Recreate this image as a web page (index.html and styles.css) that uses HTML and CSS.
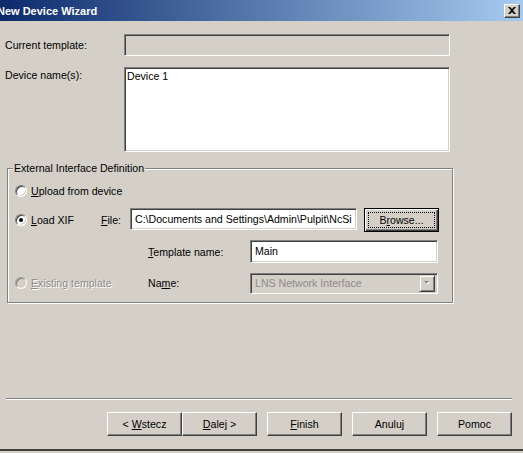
FILE: index.html
```
<!DOCTYPE html>
<html lang="pl">
<head>
<meta charset="utf-8">
<title>New Device Wizard</title>
<link rel="stylesheet" href="styles.css">
</head>
<body>
<div class="window">
  <div class="titlebar">
    <span class="title">New Device Wizard</span>
    <span class="close-btn"><svg width="8" height="7" viewBox="0 0 8 7"><path d="M0 0h2l2 2 2-2h2L5 3.5 8 7H6L4 5 2 7H0l3-3.5z" fill="#000"/></svg></span>
  </div>
  <div class="content">
    <div class="form-row row-template">
      <span class="lbl">Current template:</span>
      <div class="field field-disabled"></div>
    </div>
    <div class="form-row row-names">
      <span class="lbl lbl-names">Device name(s):</span>
      <div class="field field-area">Device 1</div>
    </div>
    <fieldset class="group">
      <legend class="group-title">External Interface Definition</legend>
      <div class="group-grid">
        <label class="radio-opt opt-upload"><span class="radio"></span><span><u>U</u>pload from device</span></label>
        <label class="radio-opt opt-xif"><span class="radio checked"></span><span><u>L</u>oad XIF</span></label>
        <span class="lbl lbl-file"><u>F</u>ile:</span>
        <div class="field field-file">C:\Documents and Settings\Admin\Pulpit\NcSi</div>
        <button class="btn btn-default btn-browse"><span class="focus">B<u>r</u>owse...</span></button>
        <span class="lbl lbl-tpl"><u>T</u>emplate name:</span>
        <div class="field field-tpl">Main</div>
        <label class="radio-opt opt-existing disabled"><span class="radio"></span><span><u>E</u>xisting template</span></label>
        <span class="lbl lbl-name">Na<u>m</u>e:</span>
        <div class="field combo">
          <span class="combo-text">LNS Network Interface</span>
          <span class="combo-btn"><svg width="7" height="5" viewBox="0 0 7 5"><path d="M1 1h5L3.5 3.5z" fill="#fff"/><path d="M0 0h5L2.5 2.5z" fill="#808080"/></svg></span>
        </div>
      </div>
    </fieldset>
    <div class="separator"></div>
    <div class="buttons">
      <div class="btn-pair">
        <button class="btn">&lt; <u>W</u>stecz</button>
        <button class="btn"><u>D</u>alej &gt;</button>
      </div>
      <button class="btn"><u>F</u>inish</button>
      <button class="btn">Anuluj</button>
      <button class="btn">Pomoc</button>
    </div>
  </div>
  <div class="frame-bottom"></div>
</div>
</body>
</html>
```
FILE: styles.css
```
html, body {
  margin: 0;
  padding: 0;
  background: #d4d0c8;
}
body {
  font-family: "Liberation Sans", Arial, sans-serif;
  font-size: 10.6px;
  color: #000;
}
.window {
  width: 523px;
  height: 453px;
  overflow: hidden;
  display: flex;
  flex-direction: column;
  background: #d4d0c8;
}
.titlebar {
  flex: none;
  height: 21px;
  display: flex;
  align-items: center;
  justify-content: space-between;
  background: linear-gradient(90deg, #0c2a6c 0%, #a6caf0 100%);
}
.title {
  margin-left: -3px;
  color: #fff;
  font-weight: bold;
  font-size: 11px;
  white-space: nowrap;
}
.close-btn {
  box-sizing: border-box;
  width: 16px;
  height: 14px;
  margin-right: 3px;
  background: #d4d0c8;
  border: 1px solid;
  border-color: #fff #404040 #404040 #fff;
  box-shadow: inset -1px -1px 0 #808080;
  display: flex;
  align-items: center;
  justify-content: center;
}
.content {
  flex: none;
  padding: 13px 0 0 5px;
}
.form-row {
  display: grid;
  grid-template-columns: 119px 326px;
}
.row-template {
  align-items: center;
  height: 22px;
}
.row-names {
  margin-top: 11px;
  align-items: start;
}
.lbl {
  white-space: nowrap;
  line-height: 13px;
}
.lbl-names {
  padding-top: 2px;
}
.field {
  box-sizing: border-box;
  background: #fff;
  border: 1px solid;
  border-color: #808080 #fff #fff #808080;
  box-shadow: inset 1px 1px 0 #404040, inset -1px -1px 0 #d4d0c8;
  padding: 0 3px;
  white-space: nowrap;
  overflow: hidden;
  display: flex;
  align-items: center;
  line-height: 13px;
}
.field-disabled {
  height: 22px;
  background: #d4d0c8;
}
.field-area {
  height: 85px;
  align-items: flex-start;
  padding: 2px 2px;
}
.group {
  box-sizing: border-box;
  width: 446px;
  margin: 10px 0 0 2px;
  padding: 0 0 8px 0;
  border: 1px solid #808080;
  box-shadow: 1px 1px 0 #fff, inset 1px 1px 0 #fff;
  min-width: 0;
}
.group-title {
  margin-left: 5px;
  padding: 0 1px;
  line-height: 13px;
  background: #d4d0c8;
}
.group-grid {
  display: grid;
  grid-template-columns: 86px 29px 18px 102px 107px 7px 75px;
  grid-template-rows: 18px 24px 24px 22px;
  row-gap: 8px;
  margin-top: 7px;
  padding-left: 7px;
  align-items: center;
}
.radio-opt {
  display: flex;
  align-items: center;
  gap: 4px;
  white-space: nowrap;
  line-height: 13px;
}
.radio {
  box-sizing: border-box;
  flex: none;
  width: 12px;
  height: 12px;
  border-radius: 50%;
  background: #fff;
  border: 1px solid;
  border-color: #808080 #fff #fff #808080;
  box-shadow: inset 1px 1px 0 #404040, inset -1px -1px 0 #d4d0c8;
  display: flex;
  align-items: center;
  justify-content: center;
}
.radio.checked::after {
  content: "";
  width: 4px;
  height: 4px;
  border-radius: 50%;
  background: #000;
}
.disabled {
  color: #8e8c88;
  text-shadow: 1px 1px 0 #fff;
}
.disabled .radio {
  background: #d4d0c8;
  border-color: #a0a0a0 #fff #fff #a0a0a0;
  box-shadow: inset 1px 1px 0 #808080, inset -1px -1px 0 #d4d0c8;
}
.opt-upload { grid-column: 1 / 5; grid-row: 1; }
.opt-xif { grid-column: 1; grid-row: 2; }
.lbl-file { grid-column: 2; grid-row: 2; }
.field-file {
  grid-column: 3 / 6;
  grid-row: 2;
  align-self: start;
  height: 22px;
  padding-left: 4px;
}
.btn-browse {
  grid-column: 7;
  grid-row: 2;
  align-self: start;
  margin-top: -1px;
}
.lbl-tpl { grid-column: 4; grid-row: 3; }
.field-tpl {
  grid-column: 5 / 8;
  grid-row: 3;
  height: 23px;
  align-self: start;
  margin-right: 1px;
  padding-left: 4px;
}
.opt-existing { grid-column: 1 / 4; grid-row: 4; }
.lbl-name { grid-column: 4; grid-row: 4; }
.combo {
  grid-column: 5 / 8;
  grid-row: 4;
  height: 21px;
  align-self: end;
  margin-right: 1px;
  background: #d4d0c8;
  color: #8e8c88;
  justify-content: space-between;
  padding: 0 2px 0 4px;
}
.combo-btn {
  box-sizing: border-box;
  flex: none;
  width: 16px;
  height: 17px;
  background: #d4d0c8;
  border: 1px solid;
  border-color: #d4d0c8 #404040 #404040 #d4d0c8;
  box-shadow: inset 1px 1px 0 #fff, inset -1px -1px 0 #808080;
  display: flex;
  align-items: center;
  justify-content: center;
}
.separator {
  width: 506px;
  margin: 95px 0 0 1px;
  border-top: 1px solid #808080;
  border-bottom: 1px solid #fff;
}
.buttons {
  display: flex;
  justify-content: flex-end;
  gap: 10px;
  margin-top: 12px;
  padding-right: 11px;
}
.btn-pair {
  display: flex;
}
.btn {
  box-sizing: border-box;
  width: 75px;
  height: 24px;
  padding: 0;
  margin: 0;
  background: #d4d0c8;
  border: 1px solid;
  border-color: #fff #404040 #404040 #fff;
  box-shadow: inset -1px -1px 0 #808080;
  font: inherit;
  color: #000;
  line-height: 13px;
}
.btn-default {
  border: 1px solid #000;
  box-shadow: inset 1px 1px 0 #fff, inset -1px -1px 0 #404040, inset -2px -2px 0 #808080;
  display: flex;
  align-items: center;
  justify-content: center;
  padding: 3px;
}
.focus {
  box-sizing: border-box;
  flex: 1;
  align-self: stretch;
  border: 1px dotted #000;
  display: flex;
  align-items: center;
  justify-content: center;
}
.frame-bottom {
  flex: none;
  height: 4px;
  margin-top: 13px;
  background: linear-gradient(#404040 0 2px, #d4d0c8 2px);
}
```
